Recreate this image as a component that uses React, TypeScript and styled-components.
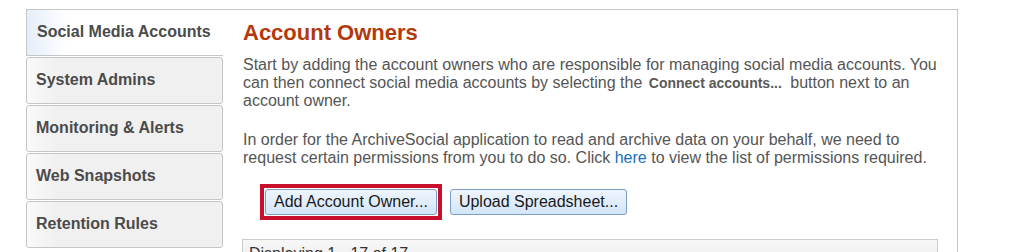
import * as React from "react";
import styled, { createGlobalStyle } from "styled-components";

const GlobalStyle = createGlobalStyle`
	html, body {
		margin: 0;
		padding: 0;
		background: #fff;
		font-family: "Liberation Sans", Arial, sans-serif;
	}
`;

const Frame = styled.div`
	display: flex;
	width: 931px;
	margin: 9px 0 0 26px;
	border-top: 1px solid #c6c6c6;
	border-right: 1px solid #c6c6c6;
	min-height: 260px;
`;

const Nav = styled.nav`
	display: flex;
	flex-direction: column;
	gap: 1px;
	width: 197px;
	flex-shrink: 0;
`;

const Tab = styled.div<{ $active?: boolean }>`
	display: flex;
	align-items: center;
	box-sizing: border-box;
	height: ${p => (p.$active ? "46px" : "47px")};
	padding-left: ${p => (p.$active ? "10px" : "9px")};
	padding-bottom: 1px;
	font-size: 16px;
	font-weight: bold;
	color: #4b4b4b;
	cursor: pointer;
	${p =>
		p.$active
			? `
		border-left: 1px solid #c6c6c6;
		border-bottom: 1px solid #c6c6c6;
		background: linear-gradient(to right, #e4eefb, #ffffff 40px);
	`
			: `
		border: 1px solid #c6c6c6;
		border-radius: 3px;
		background: linear-gradient(to right, #f9f9f9, #f0f0f0 30px);
	`}
`;

const Content = styled.main`
	flex: 1;
	padding: 10px 19px 0 20px;
	color: #555;
	font-size: 16px;
`;

const Heading = styled.h1`
	margin: 0 0 10px;
	font-size: 22px;
	font-weight: bold;
	color: #b3390c;
`;

const Para = styled.p<{ $gap?: number }>`
	margin: 0 0 ${p => p.$gap ?? 0}px;
	line-height: normal;
`;

const Inline = styled.span`
	font-size: 14px;
	font-weight: bold;
	color: #5a5a5a;
	padding: 0 4px 0 2px;
`;

const Link = styled.a`
	color: #1a70b8;
	text-decoration: none;
`;

const ButtonRow = styled.div`
	display: flex;
	align-items: center;
	gap: 8px;
	margin: 17px 0 0 17px;
`;

const Highlight = styled.span`
	display: inline-flex;
	padding: 1px;
	border: 4px solid #c8102e;
`;

const Button = styled.button`
	height: 26px;
	padding: 0 8px;
	font-family: "Liberation Sans", Arial, sans-serif;
	font-size: 16px;
	color: #1a1a1a;
	border: 1px solid #7d9fc6;
	border-radius: 3px;
	background: linear-gradient(to bottom, #eef5fd, #d3e5f8);
	cursor: pointer;
`;

const TableHeader = styled.div`
	margin: 19px 0 0 -1px;
	padding: 5px 6px;
	border: 1px solid #cccccc;
	background: linear-gradient(to bottom, #f8f8f8, #e9e9e9);
	color: #333;
	font-size: 16px;
`;

const tabs = ["Social Media Accounts", "System Admins", "Monitoring & Alerts", "Web Snapshots", "Retention Rules"];

export default function App() {
	return (
		<>
			<GlobalStyle />
			<Frame>
				<Nav>
					{tabs.map((t, i) => (
						<Tab key={t} $active={i === 0}>
							{t}
						</Tab>
					))}
				</Nav>
				<Content>
					<Heading>Account Owners</Heading>
					<Para $gap={21}>
						Start by adding the account owners who are responsible for managing social media accounts. You can then
						connect social media accounts by selecting the <Inline>Connect accounts...</Inline> button next to an
						account owner.
					</Para>
					<Para>
						In order for the ArchiveSocial application to read and archive data on your behalf, we need to request
						certain permissions from you to do so. Click <Link href="#">here</Link> to view the list of permissions
						required.
					</Para>
					<ButtonRow>
						<Highlight>
							<Button>Add Account Owner...</Button>
						</Highlight>
						<Button>Upload Spreadsheet...</Button>
					</ButtonRow>
					<TableHeader>Displaying 1 - 17 of 17</TableHeader>
				</Content>
			</Frame>
		</>
	);
}
